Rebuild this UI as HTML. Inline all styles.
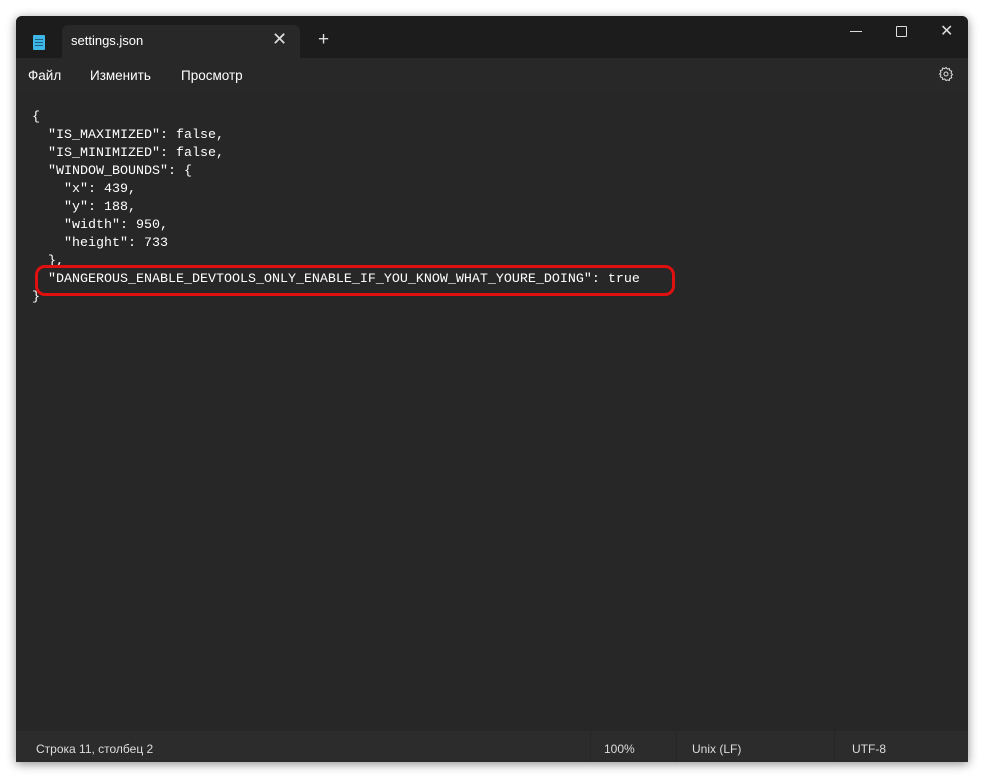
<!DOCTYPE html>
<html><head><meta charset="utf-8"><style>
html,body{margin:0;padding:0;width:985px;height:778px;background:#fff;overflow:hidden;font-family:"Segoe UI","Liberation Sans",sans-serif;}
.win{position:absolute;left:16px;top:16px;width:952px;height:746px;background:#272727;box-shadow:0 2px 10px rgba(0,0,0,.45);border-radius:6px 6px 0 0;overflow:hidden;}
.title{position:absolute;left:0;top:0;width:952px;height:42px;background:#1c1c1c;}
.tab{position:absolute;left:46px;top:9px;width:238px;height:33px;background:#282828;border-radius:6px 6px 0 0;}
.tab .t{position:absolute;left:9px;top:8px;color:#fff;font-size:13px;}
.tab .x{position:absolute;left:210px;top:4px;color:#ddd;font-size:18px;}
.plus{position:absolute;left:302px;top:13px;color:#ddd;font-size:19px;}
.ico{position:absolute;left:17px;top:19px;width:12px;height:15px;background:#3fb6e8;border-radius:1px;}
.ico i{position:absolute;left:2px;width:8px;height:1px;background:#1a5f80;}
.menu{position:absolute;left:0;top:42px;width:952px;height:34px;background:#282828;color:#fff;font-size:13.5px;}
.menu span{position:absolute;top:10px;}
.code{position:absolute;left:16px;top:93px;font-family:"Liberation Mono",monospace;font-size:13.33px;line-height:18px;color:#fff;white-space:pre;margin:0;}
.status{position:absolute;left:0;top:715px;width:952px;height:31px;background:#2c2c2c;color:#ddd;font-size:12px;}
.status span{position:absolute;top:11px;}
.sep{position:absolute;top:0;width:1px;height:31px;background:#262626;}
.box{position:absolute;left:35px;top:265px;width:634px;height:25px;border:3px solid #e01010;border-radius:10px;}
</style></head><body>
<div class="win">
<div class="title">
<div class="ico"><i style="top:4px"></i><i style="top:7px"></i><i style="top:10px"></i></div>
<div class="tab"><span class="t">settings.json</span><span class="x">✕</span></div>
<div class="plus">+</div>
<div style="position:absolute;left:834px;top:15px;width:12px;height:1px;background:#ddd"></div>
<div style="position:absolute;left:880px;top:10px;width:9px;height:9px;border:1px solid #ddd;border-radius:1px"></div>
<div style="position:absolute;left:924px;top:5px;color:#ddd;font-size:16px">✕</div>
</div>
<div class="menu"><span style="left:12px">Файл</span><span style="left:74px">Изменить</span><span style="left:165px">Просмотр</span>
<svg style="position:absolute;left:922px;top:8px" width="16" height="16" viewBox="0 0 16 16"><circle cx="8" cy="8" r="2" fill="none" stroke="#ddd"/><path d="M8 1.5l1.3 1.6 2-.6.4 2 2 .7-.6 2 1.4 1.3-1.4 1.3.6 2-2 .7-.4 2-2-.6L8 14.5l-1.3-1.6-2 .6-.4-2-2-.7.6-2L1.5 8l1.4-1.3-.6-2 2-.7.4-2 2 .6z" fill="none" stroke="#ddd" stroke-width="1"/></svg>
</div>
<pre class="code">{
  "IS_MAXIMIZED": false,
  "IS_MINIMIZED": false,
  "WINDOW_BOUNDS": {
    "x": 439,
    "y": 188,
    "width": 950,
    "height": 733
  },
  "DANGEROUS_ENABLE_DEVTOOLS_ONLY_ENABLE_IF_YOU_KNOW_WHAT_YOURE_DOING": true
}</pre>
<div class="status"><span style="left:20px">Строка 11, столбец 2</span>
<div class="sep" style="left:574px"></div><span style="left:588px">100%</span>
<div class="sep" style="left:660px"></div><span style="left:676px">Unix (LF)</span>
<div class="sep" style="left:818px"></div><span style="left:836px">UTF-8</span>
</div>
</div>
<div class="box"></div>
</body></html>
